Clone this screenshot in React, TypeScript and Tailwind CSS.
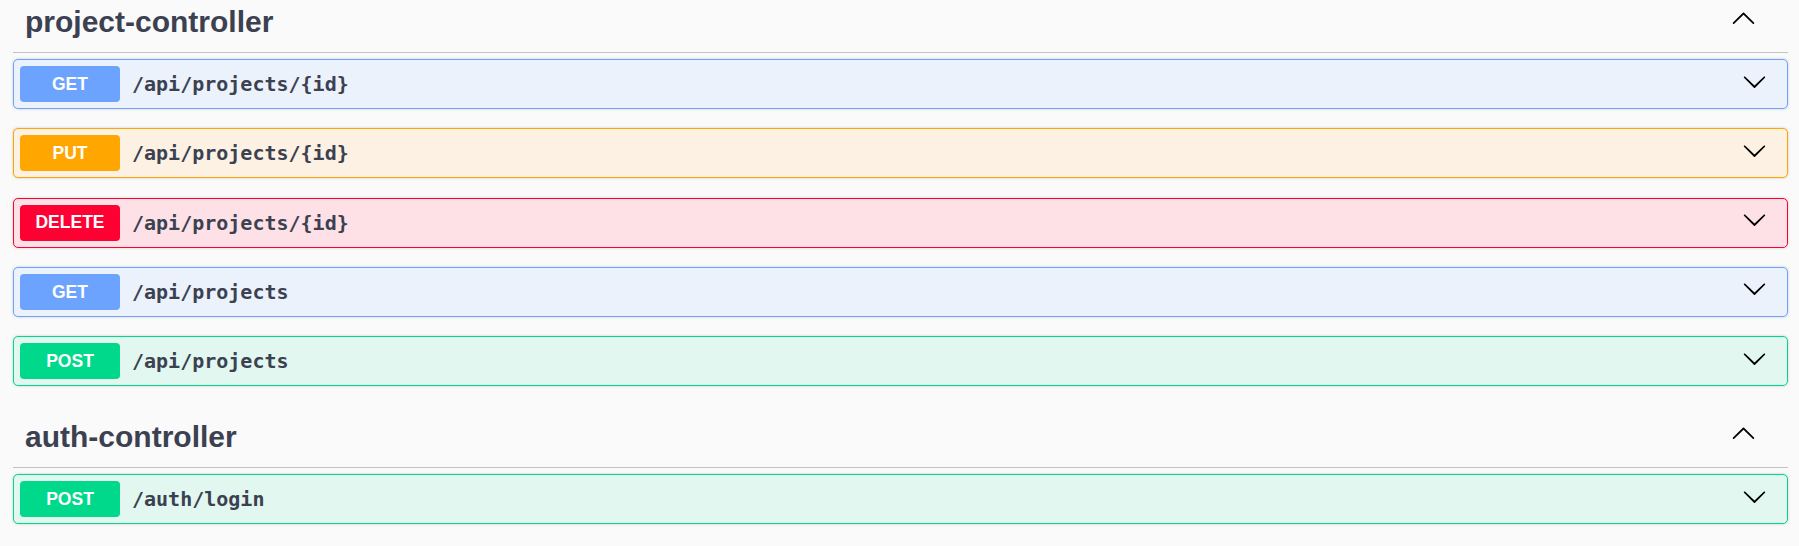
import React from 'react';

type Method = 'GET' | 'PUT' | 'DELETE' | 'POST';

const METHOD_STYLES: Record<Method, { row: string; badge: string }> = {
  GET: { row: 'bg-[#ebf2fc] border-[#6ca3ff]', badge: 'bg-[#6ca3ff]' },
  PUT: { row: 'bg-[#fcf1e2] border-[#ffa600]', badge: 'bg-[#ffa600]' },
  DELETE: { row: 'bg-[#fde1e6] border-[#ff0033]', badge: 'bg-[#ff0033]' },
  POST: { row: 'bg-[#e1f7ef] border-[#00d98b]', badge: 'bg-[#00d98b]' },
};

const sections: { name: string; ops: { method: Method; path: string }[] }[] = [
  {
    name: 'project-controller',
    ops: [
      { method: 'GET', path: '/api/projects/{id}' },
      { method: 'PUT', path: '/api/projects/{id}' },
      { method: 'DELETE', path: '/api/projects/{id}' },
      { method: 'GET', path: '/api/projects' },
      { method: 'POST', path: '/api/projects' },
    ],
  },
  {
    name: 'auth-controller',
    ops: [{ method: 'POST', path: '/auth/login' }],
  },
];

function ChevronUp() {
  return (
    <svg width="25" height="25" viewBox="0 0 20 20" fill="#000" aria-hidden>
      <path d="M17.418 14.908c.272.268.709.268.979 0s.271-.701 0-.969l-7.908-7.83c-.27-.268-.707-.268-.979 0l-7.908 7.83c-.27.268-.27.701 0 .969.271.268.709.268.979 0L10 7.767l7.418 7.141z" />
    </svg>
  );
}

function ChevronDown() {
  return (
    <svg width="25" height="25" viewBox="0 0 20 20" fill="#000" aria-hidden>
      <path d="M17.418 6.109c.272-.268.709-.268.979 0s.271.701 0 .969l-7.908 7.83c-.27.268-.707.268-.979 0l-7.908-7.83c-.27-.268-.27-.701 0-.969.271-.268.709-.268.979 0L10 13.25l7.418-7.141z" />
    </svg>
  );
}

function OpRow({ method, path }: { method: Method; path: string }) {
  const s = METHOD_STYLES[method];
  return (
    <div className={`flex items-center h-[50px] px-[6px] border rounded-[5px] shadow-[0_0_3px_rgba(0,0,0,0.19)] ${s.row}`}>
      <div className={`w-[100px] h-[36px] rounded-[4px] flex items-center justify-center text-white font-bold text-[17.5px] font-['Liberation_Sans',Arial,sans-serif] ${s.badge}`}>
        {method}
      </div>
      <span className="ml-[12px] flex-1 text-[20px] font-bold text-[#3b4151] font-['DejaVu_Sans_Mono',monospace]">
        {path}
      </span>
      <div className="mr-[14px] pb-[6px] flex items-center">
        <ChevronDown />
      </div>
    </div>
  );
}

export default function App() {
  return (
    <div className="min-h-screen bg-[#fafafa] pl-[13px] pr-[11px] flex flex-col gap-[29px] font-['Liberation_Sans',Arial,sans-serif]">
      {sections.map((sec) => (
        <div key={sec.name}>
          <div className="h-[53px] flex items-start justify-between border-b border-[#c1c3c7] pl-[12px] pr-[32px]">
            <h3 className="pt-[4px] text-[30px] leading-[36px] font-bold text-[#3b4151]">{sec.name}</h3>
            <div className="pt-[5px]">
              <ChevronUp />
            </div>
          </div>
          <div className="mt-[6px] flex flex-col gap-[19.25px]">
            {sec.ops.map((op, j) => (
              <OpRow key={j} method={op.method} path={op.path} />
            ))}
          </div>
        </div>
      ))}
    </div>
  );
}
